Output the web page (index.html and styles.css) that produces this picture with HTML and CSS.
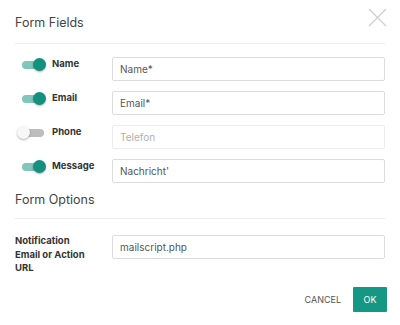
FILE: index.html
```html
<!DOCTYPE html>
<html lang="de">
<head>
    <meta charset="UTF-8">
    <title>Form Fields</title>
    <link rel="stylesheet" href="styles.css">
</head>
<body>
    <div class="dialog">
        <div class="dialog-head">
            <h2>Form Fields</h2>
            <button class="close" aria-label="close">
                <svg width="19" height="19" viewBox="0 0 19 19"><path d="M1 1L18 18M18 1L1 18" stroke="#cfcfcf" stroke-width="1.2" fill="none"/></svg>
            </button>
        </div>

        <div class="fields">
            <div class="row">
                <div class="label"><span class="toggle on"></span><b>Name</b></div>
                <input type="text" value="Name*">
            </div>
            <div class="row">
                <div class="label"><span class="toggle on"></span><b>Email</b></div>
                <input type="text" value="Email*">
            </div>
            <div class="row">
                <div class="label"><span class="toggle"></span><b>Phone</b></div>
                <input type="text" value="Telefon" class="off" disabled>
            </div>
            <div class="row">
                <div class="label"><span class="toggle on"></span><b>Message</b></div>
                <input type="text" value="Nachricht'">
            </div>
        </div>

        <h2 class="section">Form Options</h2>

        <div class="options">
            <div class="row">
                <div class="label text">Notification Email or Action URL</div>
                <input type="text" value="mailscript.php">
            </div>
        </div>

        <div class="actions">
            <button class="cancel">CANCEL</button>
            <button class="ok">OK</button>
        </div>
    </div>
</body>
</html>
```

FILE: styles.css
```css
body {
    font-family: Inter, "Noto Sans", sans-serif;
    background: #fff;
    margin: 0;
    padding: 0;
}
.dialog {
    width: 370px;
    padding: 0 15px;
}
.dialog-head {
    display: flex;
    justify-content: space-between;
    align-items: flex-start;
    height: 43px;
    border-bottom: 1px solid #ececec;
}
h2 {
    font-size: 12.5px;
    font-weight: 400;
    color: #444;
    margin: 0;
}
.dialog-head h2 {
    margin-top: 15px;
}
.close {
    background: none;
    border: none;
    padding: 0;
    margin-top: 8px;
    margin-right: -2px;
    cursor: pointer;
}
.fields {
    display: flex;
    flex-direction: column;
    gap: 10px;
    padding-top: 13px;
}
.row {
    display: flex;
    align-items: flex-start;
}
.label {
    width: 97px;
    display: flex;
    align-items: center;
    padding-top: 1px;
    font-size: 9.5px;
    color: #333;
}
.label b {
    font-weight: 700;
}
.toggle {
    position: relative;
    width: 22px;
    height: 8px;
    margin: 2px 8px 0 7px;
    border-radius: 4px;
    background: #bdbdbd;
}
.toggle::after {
    content: "";
    position: absolute;
    left: -5px;
    top: -3px;
    width: 13px;
    height: 13px;
    border-radius: 50%;
    background: #f7f7f7;
    box-shadow: 0 1px 2px rgba(0, 0, 0, 0.3);
}
.toggle.on {
    background: #80c6ba;
}
.toggle.on::after {
    left: 11px;
    background: #13917e;
}
input[type="text"] {
    flex: 1;
    height: 24px;
    box-sizing: border-box;
    padding: 0 7px;
    border: 1px solid #dcdcdc;
    border-radius: 2px;
    font-family: inherit;
    font-size: 10px;
    color: #555;
    background: #fff;
}
input.off {
    color: #b0b0b0;
    border-color: #ececec;
}
.section {
    margin-top: 9px;
    height: 26px;
    border-bottom: 1px solid #ececec;
}
.options {
    padding-top: 16px;
}
.label.text {
    display: block;
    padding-top: 0;
    margin-top: -1px;
    width: 78px;
    margin-right: 19px;
    font-weight: 700;
    line-height: 13.5px;
}
.actions {
    display: flex;
    justify-content: flex-end;
    align-items: center;
    gap: 12px;
    margin-top: 12px;
    margin-right: -2px;
}
.actions button {
    font-family: inherit;
    font-size: 9px;
    border: none;
    cursor: pointer;
}
.cancel {
    background: none;
    color: #555;
    padding: 0;
}
.ok {
    width: 34px;
    height: 25px;
    background: #149884;
    color: #fff;
    border-radius: 1px;
}
```
